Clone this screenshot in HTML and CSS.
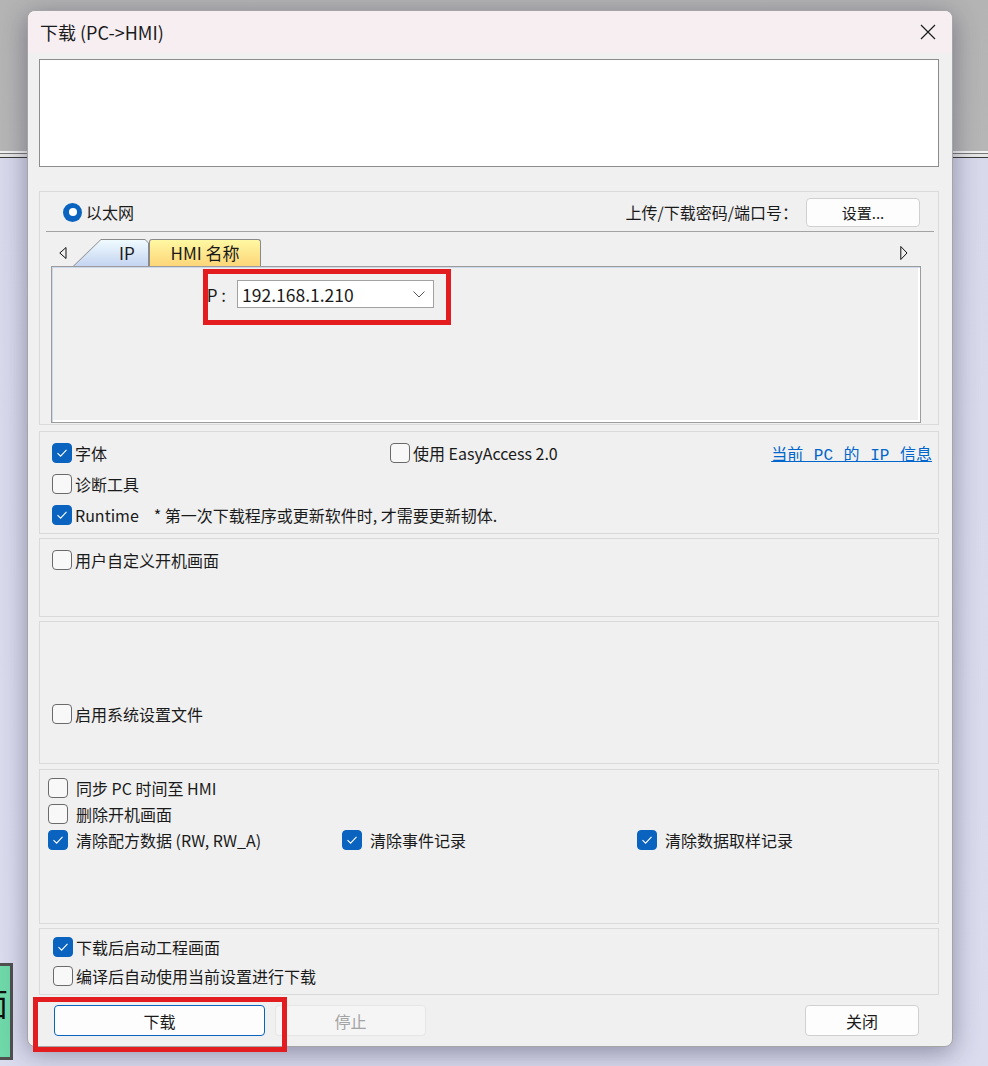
FILE: index.html
```html
<!DOCTYPE html>
<html lang="zh-CN">
<head>
    <meta charset="UTF-8">
    <title>下载 (PC-&gt;HMI)</title>
    <link rel="stylesheet" href="styles.css">
</head>
<body>
    <div class="desk-item"><span>面</span></div>

    <div class="dialog">
        <div class="titlebar">
            <span class="title">下载 (PC-&gt;HMI)</span>
            <svg class="close" width="16" height="16" viewBox="0 0 16 16">
                <path d="M1 1L15 15M15 1L1 15" stroke="#1b1b1b" stroke-width="1.2" fill="none"/>
            </svg>
        </div>

        <div class="dialog-body">
            <div class="log"></div>

            <div class="group group-conn">
                <div class="conn-row">
                    <label class="radio"><span class="radio-dot"></span>以太网</label>
                    <div class="pwd">
                        <span>上传/下载密码/端口号：</span>
                        <button class="btn btn-set">设置...</button>
                    </div>
                </div>
                <div class="sep"></div>
                <div class="tabs-row">
                    <svg class="arrow" width="8" height="12" viewBox="0 0 8 12">
                        <path d="M7 0.5L0.8 6L7 11.5Z" stroke="#111" stroke-width="1" fill="none"/>
                    </svg>
                    <div class="tab-ip"><span>IP</span></div>
                    <div class="tab-hmi">HMI 名称</div>
                    <svg class="arrow arrow-right" width="8" height="14" viewBox="0 0 8 14">
                        <path d="M0.8 0.5L7 7L0.8 13.5Z" stroke="#111" stroke-width="1" fill="none"/>
                    </svg>
                </div>
                <div class="tab-panel">
                    <div class="ip-row">
                        <span class="ip-label">IP :</span>
                        <div class="combo">
                            <span>192.168.1.210</span>
                            <svg width="12" height="7" viewBox="0 0 12 7">
                                <path d="M0.5 0.5L6 6L11.5 0.5" stroke="#555" stroke-width="1" fill="none"/>
                            </svg>
                        </div>
                    </div>
                </div>
            </div>

            <div class="group group-opts">
                <div class="row">
                    <label class="chk chk-font"><span class="box on"><svg width="12" height="10" viewBox="0 0 12 10"><path d="M1.5 5.2L4.6 8.2L10.5 1.8" stroke="#fff" stroke-width="1.1" fill="none"/></svg></span>字体</label>
                    <label class="chk"><span class="box"></span>使用 EasyAccess 2.0</label>
                    <a class="ip-link" href="#">当前 PC 的 IP 信息</a>
                </div>
                <div class="row">
                    <label class="chk"><span class="box"></span>诊断工具</label>
                </div>
                <div class="row">
                    <label class="chk"><span class="box on"><svg width="12" height="10" viewBox="0 0 12 10"><path d="M1.5 5.2L4.6 8.2L10.5 1.8" stroke="#fff" stroke-width="1.1" fill="none"/></svg></span>Runtime</label>
                    <span class="note">* 第一次下载程序或更新软件时, 才需要更新韧体.</span>
                </div>
            </div>

            <div class="group group-boot">
                <label class="chk"><span class="box"></span>用户自定义开机画面</label>
            </div>

            <div class="group group-sys">
                <label class="chk"><span class="box"></span>启用系统设置文件</label>
            </div>

            <div class="group group-clear">
                <label class="chk wide"><span class="box"></span>同步 PC 时间至 HMI</label>
                <label class="chk wide"><span class="box"></span>删除开机画面</label>
                <div class="clear-grid">
                    <label class="chk wide"><span class="box on"><svg width="12" height="10" viewBox="0 0 12 10"><path d="M1.5 5.2L4.6 8.2L10.5 1.8" stroke="#fff" stroke-width="1.1" fill="none"/></svg></span>清除配方数据 (RW, RW_A)</label>
                    <label class="chk wide"><span class="box on"><svg width="12" height="10" viewBox="0 0 12 10"><path d="M1.5 5.2L4.6 8.2L10.5 1.8" stroke="#fff" stroke-width="1.1" fill="none"/></svg></span>清除事件记录</label>
                    <label class="chk wide"><span class="box on"><svg width="12" height="10" viewBox="0 0 12 10"><path d="M1.5 5.2L4.6 8.2L10.5 1.8" stroke="#fff" stroke-width="1.1" fill="none"/></svg></span>清除数据取样记录</label>
                </div>
            </div>

            <div class="group group-after">
                <label class="chk"><span class="box on"><svg width="12" height="10" viewBox="0 0 12 10"><path d="M1.5 5.2L4.6 8.2L10.5 1.8" stroke="#fff" stroke-width="1.1" fill="none"/></svg></span>下载后启动工程画面</label>
                <label class="chk"><span class="box"></span>编译后自动使用当前设置进行下载</label>
            </div>

            <div class="buttons">
                <button class="btn btn-download">下载</button>
                <button class="btn btn-stop" disabled>停止</button>
                <button class="btn btn-close">关闭</button>
            </div>
        </div>

        <!-- annotations -->
        <div class="mark mark-ip"></div>
        <div class="mark mark-dl"></div>
    </div>
</body>
</html>
```

FILE: styles.css
```css
* {
    box-sizing: border-box;
}
body {
    margin: 0;
    width: 988px;
    height: 1066px;
    position: relative;
    overflow: hidden;
    font-family: "Noto Sans CJK SC", sans-serif;
    font-size: 16px;
    color: #1a1a1a;
    background: linear-gradient(to bottom,
        #b4b4b4 0, #b6b6b6 151px,
        #f2f2f2 151px, #f2f2f2 153px,
        #777 153px, #777 154px,
        #e6e6e6 154px, #e6e6e6 157px,
        #3a3a3a 157px, #3a3a3a 158px,
        #d9d9ec 158px, #dcdcef 100%);
}
.desk-item {
    position: absolute;
    left: -3px;
    top: 963px;
    width: 16px;
    height: 97px;
    border: 3px solid #505050;
    background: #6fd9a9;
    overflow: hidden;
}
.desk-item span {
    display: block;
    margin: 20px 0 0 -24px;
    font-size: 32px;
    line-height: 1;
    color: #111;
}
.dialog {
    position: absolute;
    left: 27px;
    top: 10px;
    width: 926px;
    height: 1037px;
    border: 1px solid #a5a5a5;
    border-radius: 8px;
    background: #f0f0f0;
    box-shadow: 0 6px 26px rgba(40, 40, 70, 0.45);
    display: flex;
    flex-direction: column;
}
.titlebar {
    height: 42px;
    flex: none;
    display: flex;
    align-items: center;
    padding: 0 16px 0 12px;
    background: #f7eef2;
    border-radius: 7px 7px 0 0;
}
.title {
    font-size: 18px;
}
.close {
    margin-left: auto;
}
.dialog-body {
    padding: 6px 13px 0 11px;
    display: flex;
    flex-direction: column;
}
.log {
    height: 108px;
    background: #fff;
    border: 1px solid #8c8c8c;
}
.group {
    border: 1px solid #dadada;
}

/* connexion */
.group-conn {
    margin-top: 24px;
    height: 234px;
}
.conn-row {
    display: flex;
    align-items: center;
    height: 28px;
    margin-top: 6px;
    padding: 0 18px 0 23px;
}
.radio {
    display: flex;
    align-items: center;
    gap: 4px;
}
.radio-dot {
    width: 19px;
    height: 19px;
    border-radius: 50%;
    background: #0a63bf;
    display: flex;
    align-items: center;
    justify-content: center;
}
.radio-dot::after {
    content: "";
    width: 8px;
    height: 8px;
    border-radius: 50%;
    background: #fff;
}
.pwd {
    margin-left: auto;
    display: flex;
    align-items: center;
    gap: 8px;
}
.btn {
    font-family: inherit;
    font-size: 15px;
    color: #1a1a1a;
    background: #fdfdfd;
    border: 1px solid #d0d0d0;
    border-radius: 4px;
    padding: 0;
}
.btn-set {
    width: 114px;
    height: 29px;
}
.sep {
    height: 1px;
    margin: 5px 4px 0 6px;
    background: #a3a3a3;
}
.tabs-row {
    display: flex;
    align-items: flex-end;
    height: 27px;
    margin-top: 7px;
    padding-left: 19px;
    font-size: 17px;
}
.arrow {
    align-self: center;
    margin-right: 6px;
}
.arrow-right {
    margin: 0 0 0 auto;
    margin-right: 30px;
}
.tab-ip {
    width: 76px;
    height: 27px;
    padding: 1px 1px 0 1px;
    background: #8a8a8a;
    clip-path: polygon(0 100%, 28px 0, 72px 0, 76px 4px, 76px 100%);
}
.tab-ip span {
    display: block;
    height: 26px;
    line-height: 26px;
    padding-left: 45px;
    background: linear-gradient(to bottom, #f0fbff, #c5d4f1);
    clip-path: polygon(0 100%, 27px 0, 71px 0, 74px 3px, 74px 100%);
}
.tab-hmi {
    width: 112px;
    height: 27px;
    line-height: 26px;
    text-align: center;
    border: 1px solid #8a8a8a;
    border-bottom: none;
    border-radius: 3px 3px 0 0;
    background: linear-gradient(to bottom, #fff8a3, #fdd679);
}
.tab-panel {
    height: 157px;
    margin: 0 17px 0 11px;
    border: 1px solid #9c9c9c;
    box-shadow: inset 1px 1px 0 #cdd8ea, inset -2px -2px 0 #fff;
    padding-top: 13px;
}
.ip-row {
    display: flex;
    align-items: center;
    gap: 11px;
    padding-left: 98px;
    font-size: 17px;
}
.ip-label {
    width: 76px;
    text-align: right;
}
.combo {
    width: 197px;
    height: 28px;
    display: flex;
    align-items: center;
    justify-content: space-between;
    padding: 0 8px 0 4px;
    background: #fff;
    border: 1px solid #a2a2a2;
    font-size: 17.5px;
}

/* options */
.group-opts {
    margin-top: 6px;
    height: 103px;
    padding: 9px 6px 0 12px;
    display: flex;
    flex-direction: column;
    gap: 7px;
}
.row {
    display: flex;
    align-items: center;
}
.chk {
    display: flex;
    align-items: center;
    height: 24px;
    gap: 3px;
    white-space: nowrap;
}
.chk.wide {
    gap: 8px;
}
.chk-font {
    width: 338px;
}
.box {
    flex: none;
    width: 20px;
    height: 20px;
    border: 1px solid #6a6a6a;
    border-radius: 4px;
    background: #f8f8f8;
    display: flex;
    align-items: center;
    justify-content: center;
}
.box.on {
    background: #0a63bf;
    border-color: #0a63bf;
}
.ip-link {
    margin-left: auto;
    font-family: "Liberation Mono", "Noto Sans CJK SC", monospace;
    font-size: 16px;
    word-spacing: 1px;
    color: #0066cc;
    text-decoration: underline;
}
.note {
    margin-left: 15px;
}
.group-boot {
    margin-top: 4px;
    height: 79px;
    padding: 9px 0 0 12px;
}
.group-sys {
    margin-top: 4px;
    height: 143px;
    padding: 80px 0 0 12px;
}
.group-clear {
    margin-top: 5px;
    height: 155px;
    padding: 6px 0 0 8px;
    display: flex;
    flex-direction: column;
    gap: 2px;
}
.clear-grid {
    display: grid;
    grid-template-columns: 294px 295px auto;
}
.group-after {
    margin-top: 4px;
    height: 67px;
    padding: 6px 0 0 13px;
    display: flex;
    flex-direction: column;
    gap: 5px;
}

/* boutons */
.buttons {
    display: flex;
    gap: 10px;
    margin-top: 10px;
    padding: 0 20px 0 15px;
}
.buttons .btn {
    height: 31px;
    font-size: 16px;
}
.btn-download {
    width: 211px;
    border-color: #0a63bf;
}
.btn-stop {
    width: 151px;
    color: #a3a3a3;
    background: #f5f5f5;
    border-color: #e6e6e6;
}
.btn-close {
    width: 114px;
    margin-left: auto;
}

.mark {
    position: absolute;
    border: 5px solid #e31d1f;
}
.mark-ip {
    left: 175px;
    top: 258px;
    width: 248px;
    height: 56px;
}
.mark-dl {
    left: 5px;
    top: 986px;
    width: 254px;
    height: 55px;
}
```
